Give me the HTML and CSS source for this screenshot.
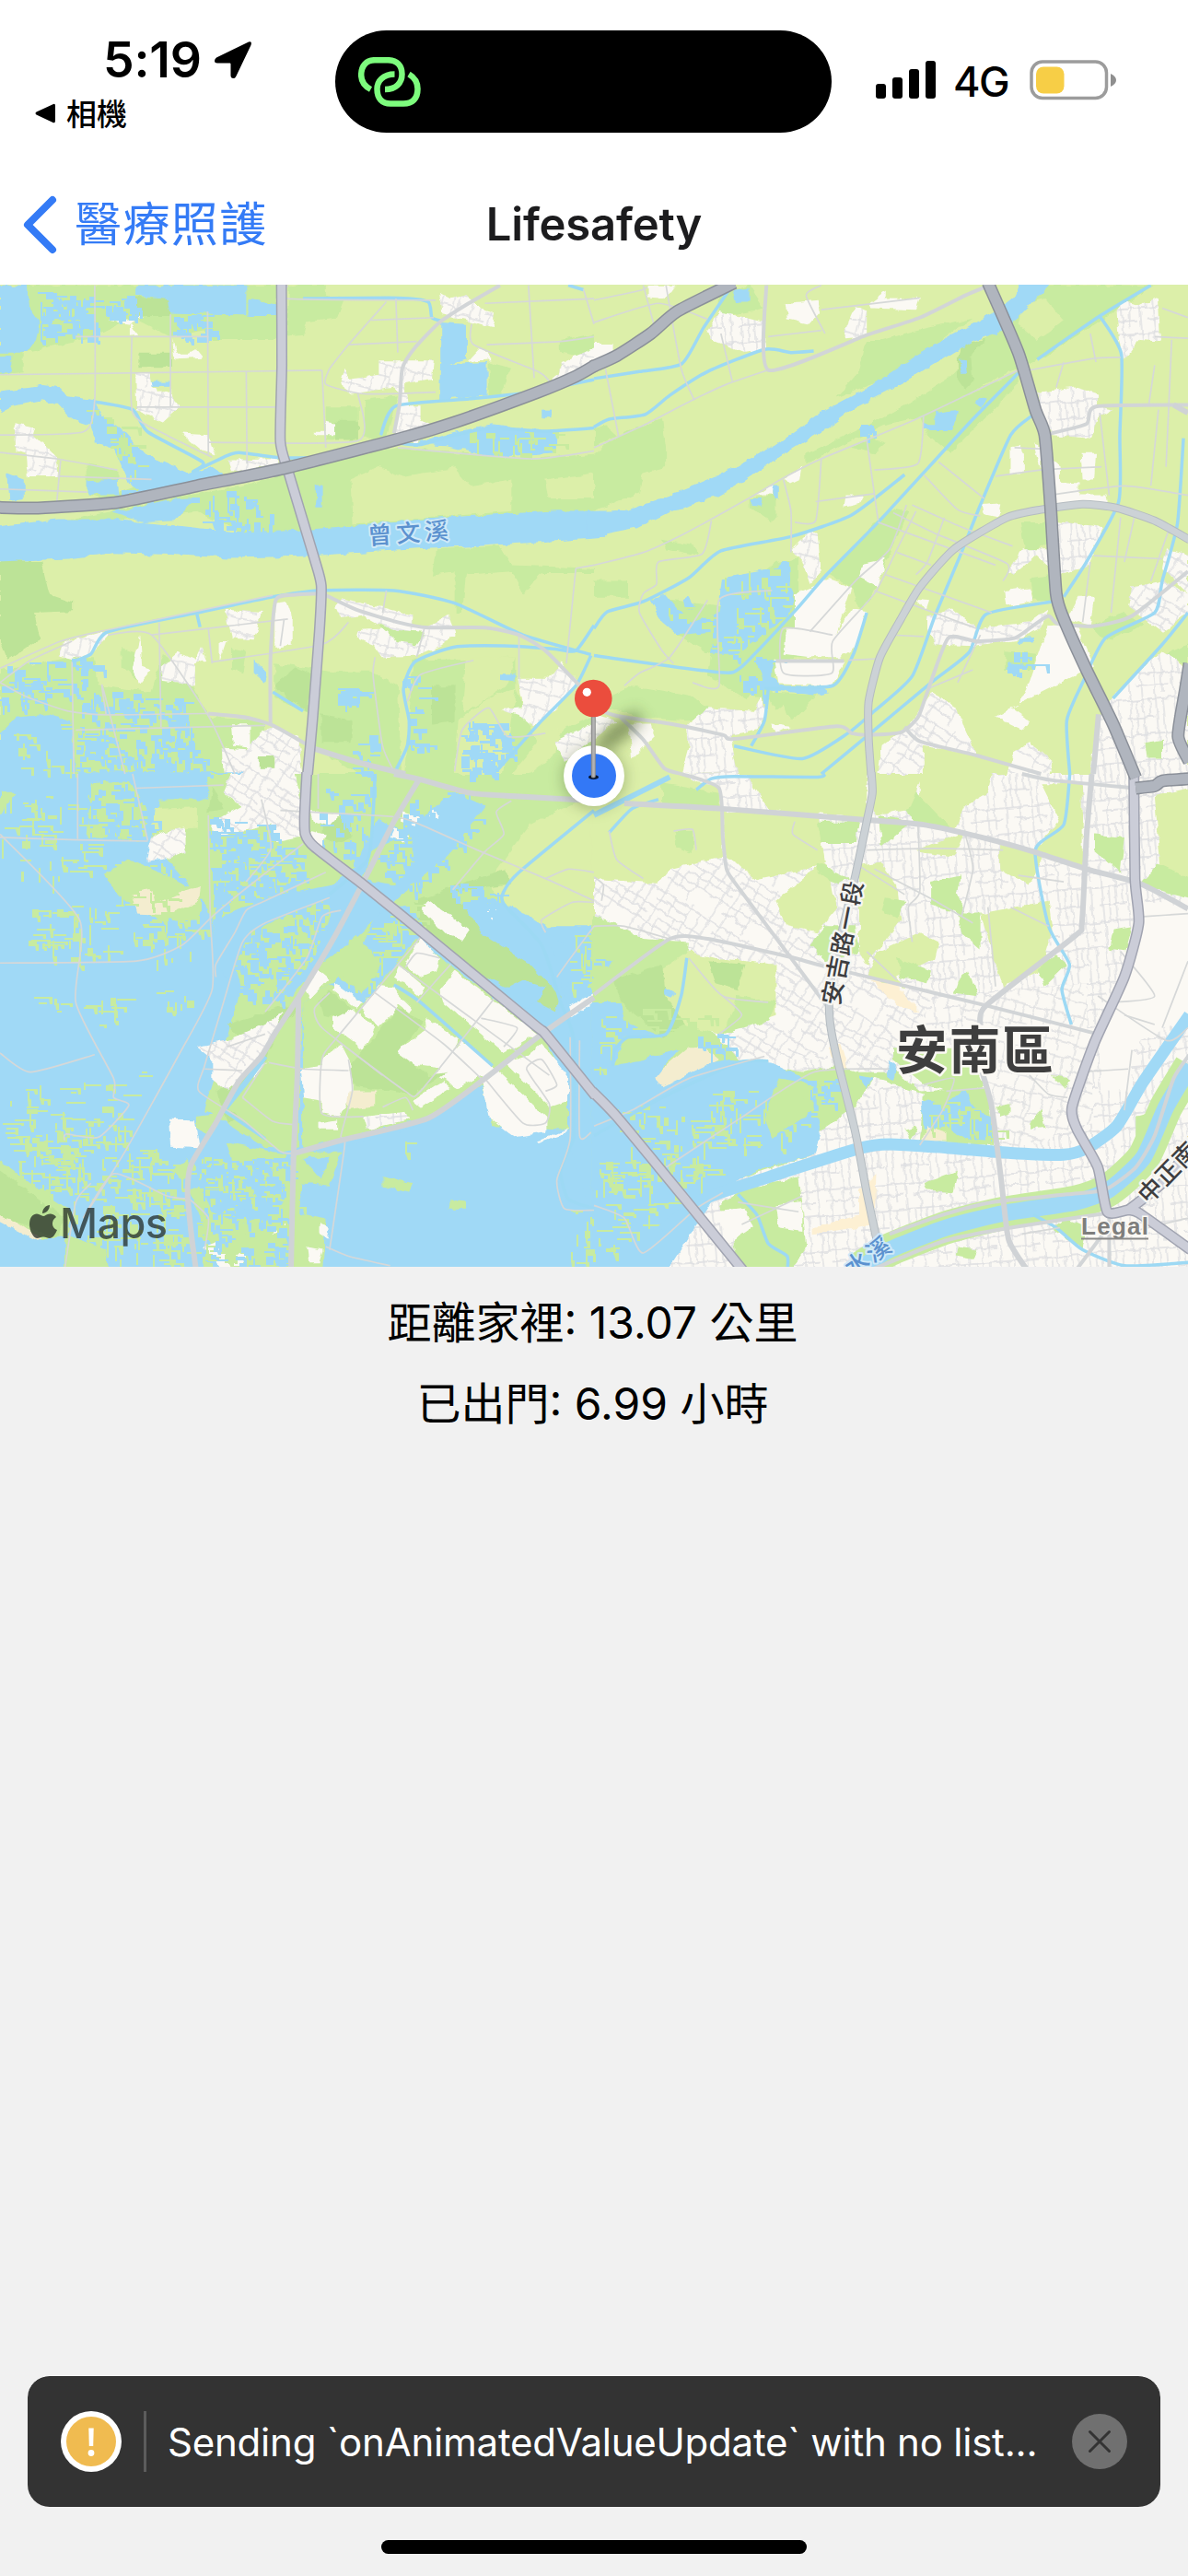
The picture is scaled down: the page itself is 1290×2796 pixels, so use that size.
FILE: index.html
```html
<!DOCTYPE html>
<html lang="zh-Hant">
<head>
<meta charset="utf-8">
<title>Lifesafety</title>
<link rel="stylesheet" href="styles.css">
</head>
<body>
<div class="screen">
  <header class="status">
    <div class="status-left">
      <div class="clock"><span class="time">5:19</span>
        <svg class="arrow" width="42" height="42" viewBox="0 0 42 42"><path d="M38 1.5 3 18.500Q1 20 1 22Q1 24.500 4 24.500H17.500Q18.500 24.500 18.500 25.500V38Q18.500 41 21.500 41Q23.500 41 24.500 38.500L40.500 5Q42 0 38 1.500Z"/></svg>
      </div>
      <div class="back-app"><svg width="22" height="22" viewBox="0 0 22 22"><path d="M20 1Q22 0 22 3V19Q22 22 19.500 21L1.500 12.500Q-.5 11 1.500 9.500Z"/></svg><span>相機</span></div>
    </div>
    <div class="island">
      <svg width="68" height="54" viewBox="0 0 68 54"><g fill="none" stroke="#7dfc7d" stroke-width="6.500"><path d="M13.500 35C6 31 3.200 26 3.200 19.500C3.200 9 9 3.200 18 3.200H32C42 3.200 47.500 9 47.500 18.500C47.500 28 41 35 29 35"/><path d="M39.500 18.500C27 18.500 20.500 26 20.500 34.500C20.500 45 26 50.500 35 50.500H49C59 50.500 64.500 45 64.500 34.500C64.500 28 61 22 55 18.500"/></g></svg>
    </div>
    <div class="status-right">
      <svg class="bars" width="66" height="42" viewBox="0 0 66 42"><rect y="25" width="11" height="16" rx="3"/><rect x="18" y="18" width="11" height="23" rx="3"/><rect x="36" y="9" width="11" height="32" rx="3"/><rect x="54" width="11" height="41" rx="3"/></svg>
      <span class="net">4G</span>
      <svg class="battery" width="95" height="44" viewBox="0 0 95 44"><rect x="2" y="2" width="81.500" height="39.500" rx="12" fill="none" stroke="#9c9c9c" stroke-width="3.500"/><rect x="7" y="7.500" width="30.500" height="29" rx="8" fill="#f7ce46"/><path d="M88 15Q94 18 94 22T88 29Z" fill="#8f8f8f"/></svg>
    </div>
  </header>
  <nav class="nav">
    <div class="nav-back"><svg width="38" height="64" viewBox="0 0 38 64"><path d="M33 5 6 32 33 59" fill="none" stroke="#347bf6" stroke-width="8" stroke-linecap="round" stroke-linejoin="round"/></svg><span>醫療照護</span></div>
    <h1>Lifesafety</h1>
  </nav>
  <main>
    <svg class="map" width="1290" height="1066" viewBox="0 309 1290 1066">
      <defs>
        <filter id="rough" filterUnits="userSpaceOnUse" x="-20" y="290" width="1330" height="1110"><feTurbulence type="fractalNoise" baseFrequency=".09" numOctaves="2" seed="4"/><feDisplacementMap in="SourceGraphic" scale="7" xChannelSelector="R" yChannelSelector="G"/></filter>
        <filter id="soft" x="-100%" y="-150%" width="300%" height="400%"><feGaussianBlur stdDeviation="8"/></filter>
        <pattern id="st1" width="54" height="46" patternUnits="userSpaceOnUse" patternTransform="rotate(14)"><rect width="54" height="46" fill="#fbf9f4"/><path d="M0 6H54M0 19H24M24 27H54M0 36H54M5 0V46M18 6V36M24 0V46M38 6V46M48 6V27" stroke="#dedfe1" stroke-width="1.300" fill="none"/></pattern>
        <pattern id="st2" width="70" height="62" patternUnits="userSpaceOnUse" patternTransform="rotate(32)"><rect width="70" height="62" fill="#fbf9f4"/><path d="M0 5H70M0 14H40M0 24H70M14 33H70M0 42H70M0 52H30M6 0V62M20 5V24M30 24V62M40 0V42M52 5V33M62 0V62M14 33V52" stroke="#dddee1" stroke-width="1.300" fill="none"/></pattern>
        <pattern id="st3" width="48" height="66" patternUnits="userSpaceOnUse" patternTransform="rotate(-5)"><rect width="48" height="66" fill="#fbf9f4"/><path d="M0 7H48M0 26H30M0 45H48M12 57H48M4 0V66M11 7V45M18 0V66M25 7V26M32 0V66M40 7V66" stroke="#dddee1" stroke-width="1.300" fill="none"/></pattern>
      </defs>
      <rect y="309" width="1290" height="1066" fill="#dcefa9"/>
      <g id="areas" filter="url(#rough)"></g>
      <g id="chips"></g>
      <g id="roads"></g>
      <g class="label river">
        <text transform="translate(400 591) rotate(-4)" letter-spacing="5">曾文溪</text>
        <text transform="translate(925 1387) rotate(-34)" letter-spacing="2">水溪</text>
      </g>
      <g class="label road-name">
        <text transform="translate(911 1092) rotate(-79)" letter-spacing="1.500">安吉路一段</text>
        <text transform="translate(1247 1308) rotate(-46)" letter-spacing="1">中正南路</text>
      </g>
      <text class="label district" x="973" y="1160" textLength="171">安南區</text>
      <g class="brand">
        <path d="M54 1308C54 1313 50 1317 46 1317C46 1312 50 1308 54 1308ZM47 1320C49 1320 51 1317 55 1317.500C58 1318 60 1319 61 1321C55 1325 56 1333 62 1335C60 1340 57 1344 54 1344C51 1344 50 1342.500 47 1342.500C44 1342.500 43 1344 40 1344C36 1344 32 1335 32 1329C32 1321 36 1317.500 40 1317.500C43 1317.500 45 1320 47 1320Z"/>
        <text class="maps" x="65" y="1344" textLength="117">Maps</text>
      </g>
      <text class="legal" x="1174" y="1340" textLength="73">Legal</text>
      <path d="M1174 1344.500H1247" stroke="#8a8a88" stroke-width="2"/>
      <g>
        <ellipse cx="672" cy="794" rx="31" ry="10" transform="rotate(-38 672 794)" fill="#42552c" opacity=".6" filter="url(#soft)"/>
        <circle cx="645" cy="844" r="34" fill="#42552c" opacity=".35" filter="url(#soft)"/>
        <circle cx="645" cy="842" r="33" fill="#fff"/><circle cx="645" cy="842" r="24" fill="#3378f6"/>
        <ellipse cx="644.500" cy="843.500" rx="5.500" ry="2.500" fill="#06152f"/>
        <path d="M644.300 776V842" stroke="#8f8f8f" stroke-width="5" stroke-linecap="round"/><path d="M644.500 779V842" stroke="#b3b3b3" stroke-width="2.500" stroke-linecap="round"/>
        <circle cx="644.300" cy="758" r="20.300" fill="#eb4d3d"/><circle cx="637.300" cy="751.300" r="4.600" fill="#fff"/>
      </g>
    </svg>
    <p>距離家裡: 13.07 公里</p>
    <p>已出門: 6.99 小時</p>
  </main>
  <footer>
    <div class="toast">
      <svg width="66" height="66" viewBox="0 0 66 66"><circle cx="33" cy="33" r="33" fill="#fff"/><circle cx="33" cy="33" r="27" fill="#f0bb50"/><path d="M30.300 18.500H35.700L35.200 38H30.800Z" fill="#fff"/><circle cx="33" cy="45.500" r="3.400" fill="#fff"/></svg>
      <i class="rule"></i>
      <span class="message">Sending `onAnimatedValueUpdate` with no list...</span>
      <svg width="60" height="60" viewBox="0 0 60 60"><circle cx="30" cy="30" r="30" fill="#707070"/><path d="M19.500 19.500 40.500 40.500M40.500 19.500 19.500 40.500" stroke="#333" stroke-width="3" stroke-linecap="round"/></svg>
    </div>
    <div class="home"></div>
  </footer>
</div>
<script src="map.js"></script>
</body>
</html>
```
FILE: styles.css
```css
* { box-sizing: border-box; }
body { margin: 0; background: #f1f1f1; font-family: Inter, "Noto Sans CJK TC", sans-serif; color: #000; }
.screen { width: 1290px; height: 2796px; display: flex; flex-direction: column; overflow: hidden; }
.status { height: 177px; background: #fff; display: grid; grid-template-columns: 364px 539px 1fr; align-items: start; }
.status-left { padding: 33px 0 0 38px; }
.clock { display: flex; align-items: center; gap: 12px; padding-left: 74px; height: 64px; }
.time { font-size: 53.5px; font-weight: 600; line-height: 64px; letter-spacing: -.2px; width: 108px; }
.back-app { display: flex; align-items: center; gap: 12px; height: 52px; font-size: 33px; font-weight: 500; }
.back-app span { margin-top: -3px; }
.island { height: 111px; margin-top: 33px; border-radius: 56px; background: #000; padding: 29px 25px; }
.status-right { display: flex; align-items: center; padding: 65px 0 0 48px; height: 109px; }
.net { font-size: 45px; font-weight: 500; line-height: 44px; margin: 4px 0 0 18px; width: 64px; letter-spacing: -1.5px; }
.battery { margin-left: 19px; }
.nav { height: 132px; background: #fff; display: grid; grid-template-columns: 1fr auto 1fr; align-items: center; padding: 0 24px; }
.nav-back { display: flex; align-items: center; gap: 19px; color: #347bf6; font-size: 51px; line-height: 70px; letter-spacing: 1.4px; padding-top: 2px; }
.nav h1 { margin: 0; font-size: 49px; font-weight: 600; letter-spacing: -.2px; color: #1c1c1e; }
main { flex: 1; }
.map { display: block; }
main p { margin: 0; height: 88px; line-height: 88px; padding: 17px 3px 0 0; font-size: 48px; text-align: center; }
footer { display: flex; flex-direction: column; align-items: center; gap: 36px; height: 218px; }
.toast { width: 1230px; height: 143px; border-radius: 24px; background: #333; border-top: 1px solid #fff; display: flex; align-items: center; padding: 0 36px; color: #fff; }
.rule { width: 3px; height: 66px; background: #5c5c5c; margin: 0 23px 0 24px; }
.message { flex: 1; font-size: 42px; white-space: nowrap; letter-spacing: -.22px; }
.home { width: 462px; height: 15px; border-radius: 8px; background: #000; }
.label { font-family: "Noto Sans CJK TC", sans-serif; paint-order: stroke; stroke-linejoin: round; }
.river { font-size: 26px; font-weight: 500; fill: #5b91cf; stroke: #cfe9f8; stroke-width: 4px; }
.road-name { font-size: 26px; font-weight: 500; fill: #3d3d3f; stroke: #f5f5f2; stroke-width: 5px; }
.district { font-size: 56px; font-weight: 700; fill: #3e3e3e; stroke: #fbf9f4; stroke-width: 5px; }
.brand { fill: #1d2420; opacity: .72; }
.maps { font-size: 45px; font-weight: 500; }
.legal { font-family: "Liberation Sans", sans-serif; font-size: 26px; font-weight: 700; fill: #7e7e7c; stroke: #fbf9f4; stroke-width: 3px; paint-order: stroke; }
```
FILE: map.js
```js
// Map tiles: every quadrant keeps its own local grid, converted to map pixels by its origin.
const SX = 0.41135, SY = 0.34438;
const origin = { A: [0, 300], B: [645, 300], C: [0, 840], D: [645, 840] };
const fill = { mid: '#c8eba0', dark: '#bce397', light: '#dcefa9', water: '#a0d9f6', town: '#fbf9f4', s1: 'url(#st1)', s2: 'url(#st2)', s3: 'url(#st3)', sand: '#f4edcf', orange: '#fdf0d3' };
const stroke = { motor: [['#8b9099', 14], ['#b0b5be', 11]], main: [['#a1a4b1', 12], ['#cbcdd8', 9]], ring: [['#b5bcc1', 9], ['#ccd2d6', 7]], major: [['#d0d3d6', 6]], road: [['#d2d5d7', 4]], lane: [['#d6d8d8', 1.7]], creek: [['#9dd9f4', 3.5]], canal: [['#9dd9f4', 6]], river: [['#a0d9f6', 13]], bank: [['#c8eba0', 36], ['#a0d9f6', 18]] };

const areas = {
A: [
['mid','0,28 730,28 730,200 560,200 540,170 450,190 350,130 250,190 60,240 60,300 0,305'],
['dark','350,65 450,65 450,125 350,125'],['dark','368,243 452,243 452,285 368,285'],
['mid','760,28 860,28 860,60 910,70 890,130 810,140 800,185 760,190'],['mid','860,410 945,410 945,515 860,515'],['dark','885,455 945,455 945,515 885,515'],
['mid','860,580 1050,540 1400,575 1568,560 1568,740 1230,755 860,800 640,810 520,740 300,770 180,765 450,700 640,660'],
['light','925,640 1000,600 1060,630 1200,605 1240,660 1350,640 1350,740 930,780'],['light','1440,640 1568,620 1568,700 1450,700'],
['mid','1150,860 1320,850 1350,910 1568,920 1568,935 1430,935 1380,1000 1350,930 1230,940 1220,1060 1200,1060 1200,930 1140,940'],
['mid','1290,270 1350,290 1320,375 1290,375'],['mid','960,390 1050,375 1020,510 960,510'],['mid','1480,200 1568,180 1568,260 1480,240'],['mid','230,590 310,610 310,680 400,640 440,665 300,710 230,690'],
['dark','0,890 110,900 130,1000 190,1025 190,1055 90,1060 105,1140 20,1210 0,1150'],
['mid','0,1240 190,1200 250,1200 260,1290 400,1310 430,1190 510,1290 550,1390 700,1400 700,1568 0,1568'],
['mid','725,1220 870,1245 980,1245 1050,1290 1060,1568 940,1568 830,1480 830,1380 725,1330'],['dark','725,1290 780,1235 830,1260 810,1370 740,1310'],['dark','850,1380 930,1400 930,1470 850,1470'],
['mid','1090,1210 1360,1200 1360,1300 1290,1330 1210,1400 1200,1568 1070,1568'],['light','1230,1200 1360,1200 1340,1290 1220,1380'],['dark','1140,1290 1200,1290 1200,1400 1140,1410'],['mid','1360,1300 1430,1500 1500,1420 1568,1380 1568,1568 1330,1568'],['light','1440,1440 1480,1420 1470,1500 1400,1568 1350,1568'],['mid','320,1170 370,1190 360,1270 320,1230'],['mid','610,1170 650,1180 640,1250 610,1240'],
['water','0,28 70,28 75,90 105,140 95,200 70,240 0,240'],['water','360,28 650,28 650,120 560,118 450,115 445,70 360,60'],['water','655,72 730,85 730,125 655,125'],['water','0,250 30,250 30,300 0,300'],
['water','0,365 110,345 160,352 180,378 250,390 270,440 320,480 370,545 430,585 500,622 560,600 610,640 440,672 385,690 340,650 300,540 250,520 240,470 190,450 150,400 110,390 30,410 0,430'],
['water','295,745 440,705 520,700 460,770 380,775'],['water','20,620 65,640 65,700 25,705'],['water','230,645 310,640 315,690 230,690'],['water','833,658 850,658 850,728 835,728'],
['water','0,788 150,765 290,765 460,785 640,808 800,800 1000,776 1230,756 1470,738 1600,740 1600,824 1230,852 1000,867 800,882 600,887 450,877 300,872 180,890 -20,899'],
['water','1162,278 1285,270 1285,375 1160,390'],['water','1165,145 1230,150 1230,260 1165,285'],['water','1080,530 1200,490 1300,468 1380,480 1472,490 1470,555 1300,570 1180,535'],['water','1430,420 1455,420 1455,445 1430,445'],
['water','0,1440 40,1390 130,1380 190,1400 200,1568 0,1568'],['water','670,1210 705,1250 700,1280 670,1250'],['water','1320,1255 1358,1255 1355,1275 1320,1272'],['water','395,330 450,330 450,345 395,345'],
['town','455,195 465,240 500,240 515,230 532,255 460,260'],['s1','358,305 395,305 400,345 425,365 450,360 452,305 450,375 475,410 430,460 360,425'],['town','280,138 380,128 345,150 365,185 345,188 345,150'],['town','480,495 550,500 570,565 530,545'],
['s1','40,465 95,480 90,500 150,570 155,630 75,630 70,560 45,550'],['s1','600,580 735,575 735,590 640,615 610,610'],['town','830,490 860,490 860,455 885,460 885,500 835,500'],['s1','895,340 910,290 920,325 1000,310 1000,265 1030,265 1145,265 1140,325 1070,340 1070,380 1040,350 930,370'],
['s1','1060,370 1075,370 1080,410 1110,410 1110,450 1140,470 1100,525 1040,500'],['s1','1160,50 1190,70 1230,60 1280,110 1305,120 1300,160 1240,140 1165,120'],['town','1235,270 1270,225 1300,262 1260,265'],['s1','1568,225 1480,270 1475,310 1450,330 1500,320 1568,280'],
['s1','165,1155 270,1120 290,1125 240,1190 190,1205 155,1195'],['s1','595,1050 690,1060 670,1145 610,1140 600,1090'],['town','725,1030 755,1025 770,1080 770,1160 725,1170'],['s1','425,1230 470,1185 515,1210 530,1170 545,1210 515,1220 515,1290 475,1280 430,1275'],['town','350,1235 370,1130 375,1230 400,1240 370,1285'],['town','580,1150 597,1150 580,1210'],
['s1','885,1040 900,1015 1000,1040 1090,1070 1090,1100 1120,1110 1185,1065 1200,1130 1160,1165 1100,1195 1010,1200 990,1165 940,1140 945,1115 1020,1110 960,1070 900,1080'],['mid','1000,1100 1050,1115 1120,1120 1100,1160 1050,1150 1020,1120'],
['s2','585,1485 650,1490 690,1440 730,1420 790,1450 800,1568 590,1568'],['town','610,1415 660,1415 660,1485 615,1480'],['s1','1365,1265 1450,1265 1480,1215 1525,1280 1470,1360 1410,1420 1380,1390 1320,1365 1380,1360'],['s1','1568,1405 1465,1465 1490,1530 1550,1470 1568,1470'],['dark','685,1510 725,1510 725,1550 685,1550']
],
B: [
['mid','0,560 80,490 180,450 190,540 190,600 130,620 120,680 0,740'],['mid','720,200 760,200 850,170 1000,130 850,260 780,320 640,380 700,300'],['dark','970,215 1085,180 1100,230 960,280'],
['mid','330,60 410,28 450,100 330,130'],['mid','1090,120 1200,28 1480,28 1180,260 1120,290 870,440 760,470 560,590 560,560 720,470 830,400 950,310'],['light','1130,90 1190,70 1240,140 1170,200 1120,150'],['dark','960,255 995,255 1000,330 980,355 960,320'],
['mid','860,440 1120,300 1120,340 940,560 880,500'],['mid','0,480 30,470 60,500 0,540'],['mid','180,830 270,850 280,880 190,860'],['mid','0,960 90,960 90,1010 0,1010'],['mid','730,790 790,730 830,740 780,880 740,1000 700,1060 680,980 620,940'],
['mid','150,1010 330,1040 480,900 540,890 540,1180 480,1260 400,1330 300,1260 310,1190 220,1130'],['mid','500,1100 640,1150 640,1200 500,1200'],
['mid','100,1290 250,1320 330,1380 250,1400 120,1390 0,1350'],['mid','380,1260 450,1250 480,1330 440,1340'],['mid','460,1310 590,1320 540,1380 520,1400 500,1350 480,1370'],
['mid','1125,775 1200,775 1200,840 1140,880'],['mid','1150,950 1210,940 1230,1030 1160,1020'],['mid','1085,1180 1170,1190 1160,1240 1085,1240'],['mid','1310,1100 1400,1060 1450,1100 1350,1150'],['mid','1568,1160 1510,1190 1568,1230'],['mid','410,700 480,690 480,760 465,770 410,725'],['mid','680,540 730,510 770,525 740,555'],
['water','-20,742 90,736 180,698 330,625 480,530 600,430 740,338 850,248 940,188 1070,105 1110,68 1130,10 1215,10 1200,32 1085,170 1000,203 850,312 700,405 620,475 500,562 400,643 330,692 200,742 120,790 -20,823'],
['water','365,45 410,40 410,80 375,80'],['water','965,260 980,262 985,310 970,310'],['water','470,655 488,655 488,705 475,705'],['water','415,700 445,700 440,722 415,720'],['water','870,465 900,465 900,430 960,420 950,485 870,485'],['water','1005,400 1020,380 1035,385 1025,415'],
['water','150,1020 190,1000 250,1090 330,1060 340,950 480,920 500,895 515,900 520,980 530,990 520,1060 450,1130 380,1190 310,1190 310,1120 220,1130 180,1090'],['water','235,1020 255,1005 270,1050 240,1040'],['water','430,1220 470,1210 470,1260 490,1290 600,1290 620,1310 580,1320 450,1300'],['water','1120,1140 1165,1135 1160,1155 1115,1155'],['water','1090,1220 1145,1225 1145,1240 1090,1240'],
['s3','300,170 330,110 450,145 455,230 400,240 310,200'],['town','505,85 590,75 598,110 570,150 510,135'],['s1','660,175 690,95 720,110 720,190 660,195'],['town','725,85 770,45 770,68 860,70 850,105 730,100'],['town','140,28 215,28 190,70 140,65'],['town','0,215 50,215 50,250 0,290'],
['s3','1380,110 1400,80 1440,90 1490,65 1495,205 1440,200 1400,260 1385,200'],['s3','1175,365 1270,350 1330,370 1330,410 1370,420 1330,450 1310,510 1210,500 1180,420'],['town','1100,535 1120,530 1135,560 1135,620 1100,620'],['town','1160,530 1180,540 1180,610'],['town','1210,580 1230,600 1230,650 1280,655 1280,690 1350,690 1355,715 1190,720'],['town','1285,560 1325,560 1320,640 1290,640'],['town','1025,720 1075,715 1070,760 1030,750'],
['s3','1205,770 1345,790 1300,920 1220,940 1170,880 1110,940 1090,930 1130,860 1200,860'],['town','1085,990 1150,980 1160,1025 1090,1040'],['town','530,1000 620,955 680,980 640,1130 680,1045 720,1055 690,1170 650,1200 610,1200 570,1200 500,1190 505,1110 530,1110'],['town','475,1210 665,1210 630,1290 485,1285'],['s1','520,860 570,800 590,810 600,930 570,970 550,900'],['town','710,905 770,890 750,980 700,950'],['town','665,690 710,690 700,715 660,725'],['town','500,635 550,600 545,640 520,655'],['town','430,690 475,655 470,690'],
['s1','880,1070 950,1050 1010,1110 1150,1090 1200,1050 1180,1110 1110,1145 1000,1165 900,1160 880,1110'],['town','850,1015 885,1020 875,1055'],['town','1200,1100 1270,1100 1320,1230 1200,1300 1100,1360 1150,1400 1130,1430 1060,1390 1120,1350 1150,1280'],['town','1250,1080 1280,1010 1320,1010 1310,1100'],
['s2','1568,880 1510,860 1500,920 1568,1000'],['s2','1410,1040 1420,980 1500,960 1568,1000 1568,1060 1500,1120'],['s2','760,1480 830,1420 890,1310 960,1360 980,1430 1010,1510 870,1480 870,1568 750,1568'],['s2','1110,1500 1150,1470 1210,1530 1200,1568 1090,1568'],
['s3','245,1415 300,1360 420,1370 440,1330 455,1370 430,1430 360,1450 380,1568 230,1568 250,1480'],['town','470,1410 520,1420 480,1440'],['s3','1330,1400 1370,1320 1500,1180 1540,1210 1568,1250 1568,1568 1310,1568'],['mid','1455,1470 1500,1460 1500,1520 1460,1520'],['s1','0,1380 60,1400 40,1420 0,1460'],['town','90,1410 150,1410 160,1450 100,1520']
],
C: [
['water','-20,-5 640,-5 850,340 1568,320 1568,1590 -20,1590'],
['mid','550,0 1568,0 1568,340 1380,400 1000,420 940,600 800,720 780,1180 700,1180 600,1100 540,1060 600,830 640,650 580,600 550,420 400,210 420,80 550,80'],
['light','1300,320 1400,160 1568,60 1568,480 1440,480 1340,410 1300,360'],['light','405,110 520,105 520,170 400,180'],
['mid','240,30 340,20 390,110 390,210 230,200'],['mid','0,60 40,60 0,130'],['mid','270,320 340,270 420,310 530,370 530,460 420,460 330,400'],['sand','345,370 400,360 410,410 480,370 530,355 525,400 440,445 360,440'],
['water','560,460 700,390 880,350 930,300 1000,140 1060,180 1200,60 1280,100 1180,260 1060,380 900,560 840,600 770,700 600,640 570,600'],['mid','620,600 660,500 780,430 870,400 870,450 830,580 740,700 640,690'],['mid','850,600 940,510 1010,600 960,690 900,650'],
['dark','560,40 590,110 550,120'],['mid','810,0 1000,0 980,140 930,230 850,240 810,180'],['dark','850,150 920,130 930,200 890,220 850,200'],['mid','980,240 1080,190 1100,280 1040,350 960,330'],
['dark','1090,400 1330,300 1350,350 1200,370 1270,500 1400,600 1480,700 1470,750 1200,590 1120,500'],['water','1330,680 1380,650 1440,670 1420,720 1380,740'],['water','1440,500 1520,560 1500,680 1568,690 1568,1568 1540,1300 1500,1150 1500,760 1470,590'],
['dark','600,790 780,720 790,1180 640,1080 600,1100 570,1000 680,900'],['mid','740,800 790,740 790,1180 740,1190 600,1050 700,900'],
['mid','800,720 870,660 960,720 1100,520 1440,830 1500,1000 1500,1120 1300,1140 1100,1090 900,1150 800,1180'],['dark','840,720 870,680 930,740 900,770 850,760'],
['water','810,1210 1100,1110 1270,980 1300,1110 1500,1120 1470,1270 1500,1350 1568,1370 1568,1590 850,1590 880,1250'],
['mid','780,1190 900,1190 870,1300 790,1290'],['water','800,1210 870,1210 850,1280'],
['mid','-20,1200 80,1290 190,1380 180,1450 110,1470 -20,1390'],['dark','-20,1230 90,1330 170,1400 150,1460 -20,1380'],['sand','-20,1380 40,1410 110,1465 100,1475 -20,1400'],['mid','170,1450 280,1500 290,1590 170,1590'],
['mid','500,1310 800,1200 780,1590 700,1590 560,1500'],['water','540,1180 720,1180 750,1350 640,1420 560,1380 520,1280'],['mid','600,1160 760,1200 700,1280 620,1250'],['mid','520,1080 580,1070 550,1140 520,1120'],['mid','450,1250 500,1210 490,1280'],['mid','770,1380 860,1400 850,1590 780,1590'],
['mid','1010,1270 1090,1290 1080,1320 1010,1300'],['mid','1190,1345 1230,1348 1230,1370 1185,1370'],
['s2','590,60 610,0 780,0 800,120 790,200 730,215 720,160 640,180 560,205 560,150 640,100'],['s2','385,275 400,200 430,180 490,170 490,245 430,270'],['town','820,120 900,125 870,165 830,150'],['town','820,180 860,190 850,240 820,210'],['town','1060,120 1120,140 1100,165 1060,150'],['town','1150,110 1165,140 1140,145 1130,125'],['town','1040,175 1080,195 1070,215 1030,200'],['town','1130,400 1240,490 1220,525 1180,510 1115,430'],['town','1275,425 1310,415 1300,460 1275,445'],
['town','1110,520 1160,580 1150,620 1110,640 1070,600'],['town','1050,600 1120,670 1110,700 1040,640'],['town','1200,620 1420,820 1330,880 1170,720 1160,680'],['town','1000,665 1040,670 1050,740 1000,800 950,740'],['town','1040,680 1090,740 1080,755 1020,700'],['town','840,615 870,645 820,710 805,680'],['town','880,655 955,720 940,740 880,680'],['town','930,740 990,800 960,870 880,800 880,770'],['town','850,900 900,850 930,920 930,1000 900,1080 850,1070 850,1030 800,1020 795,930 850,920'],
['town','1130,770 1210,840 1180,930 1050,910 1050,870 1120,810'],['town','1160,930 1220,840 1310,930 1210,990 1150,950'],['town','1330,910 1390,890 1430,850 1500,950 1500,1030 1450,1050 1340,920'],['town','1270,970 1310,930 1440,1080 1440,1130 1360,1145 1290,1080'],
['dark','920,930 1050,740 1120,780 1050,880 1130,950 1180,940 1090,1010 940,985'],['sand','920,1000 990,1000 990,1050 915,1060'],['town','1090,1030 1170,970 1190,990 1110,1050'],['s3','960,1080 1070,1065 1080,1090 970,1120'],
['s2','520,860 600,840 700,790 750,750 700,870 640,960 600,1000 560,960 560,900'],['town','445,1088 515,1090 520,1140 530,1180 450,1175'],['town','670,940 710,900 690,930 670,960'],['town','840,1100 890,1090 890,1120 840,1120'],['town','720,1450 760,1410 760,1440'],['town','845,1420 870,1430 865,1465 845,1450'],['town','535,1490 570,1475 600,1530 650,1500 640,1568 590,1568'],['town','810,1490 850,1500 840,1540 815,1540'],['town','1415,1160 1500,1115 1480,1140 1420,1165'],['town','1500,730 1568,690 1568,720 1510,770']
],
D: [
['s3','0,0 1600,0 1600,1590 0,1590'],['s2','0,240 620,280 700,900 400,900 0,900'],['s2','600,620 900,680 800,950 690,1060 600,740'],['s1','960,700 1300,660 1320,1100 1060,1200'],
['light','-5,-5 330,-5 340,260 200,300 170,345 -5,330'],['s3','230,-5 380,-5 360,40 270,30'],['light','340,120 590,110 610,280 560,300 430,335 380,280 345,260'],['light','400,0 720,0 720,140 460,110'],['mid','800,0 960,180 850,150 780,60'],['light','730,0 870,0 830,110 740,130'],['light','860,0 1050,0 1040,60 980,100 950,180 860,70'],['mid','750,130 840,150 760,230'],['mid','180,30 330,60 330,115 180,100'],['mid','210,180 260,180 260,250 220,230'],['mid','590,150 700,150 690,215 600,215'],
['light','1180,30 1290,30 1290,300 1190,260 1160,240 1230,150'],['light','1480,70 1600,40 1600,400 1500,350'],['mid','1490,280 1600,340 1600,400 1440,350'],['light','480,400 600,280 620,300 640,430 590,500 510,480'],['mid','590,280 680,330 640,350 590,310'],
['light','700,290 760,280 800,350 810,460 720,600 700,560'],['mid','770,390 820,400 800,460 760,430'],['light','850,240 980,180 950,260 880,250'],['light','1070,220 1190,250 1150,350 1070,300'],['mid','890,340 970,320 960,380 980,440 1020,440 1020,550 970,500 960,440 890,410'],['light','1020,440 1200,400 1210,500 1180,620 1080,670 1050,560'],['light','860,500 910,530 900,580 800,640 820,680 720,640 750,560'],['mid','800,580 890,620 880,660 810,640'],['mid','960,650 990,620 1010,700 950,690'],['mid','570,540 610,480 690,480 700,560 610,590'],['mid','1320,190 1400,200 1390,310 1320,240'],['mid','1370,490 1420,480 1410,560 1360,550'],['mid','1170,610 1220,570 1250,600 1190,670'],
['mid','-5,450 50,470 130,520 250,530 230,760 330,830 380,900 550,940 640,920 700,940 800,940 860,1000 1040,990 1060,1170 860,1160 870,1010 740,960 690,1050 590,1130 580,1200 420,1260 200,1360 -5,1500'],
['light','150,640 250,560 320,580 480,600 480,760 330,820 230,790'],['dark','50,650 180,600 190,700 240,790 180,830 80,730'],['dark','300,590 400,600 380,680 320,660'],['mid','380,700 480,720 460,780 340,820'],
['water','-5,720 70,720 80,780 180,830 80,830 60,920 130,860 230,860 180,930 360,900 470,910 590,980 590,1080 600,1130 580,1200 430,1250 330,1310 180,1590 -5,1590'],['mid','50,920 80,850 200,850 270,850 130,900'],['mid','490,960 580,980 580,1060 470,1150 450,1080'],
['sand','160,960 180,930 250,860 290,860 330,900 180,985'],['water','865,1030 930,1040 980,990 1000,1050 1050,1080 1050,1160 980,1150 930,1110 870,1120'],['sand','880,1110 930,1130 930,1160 865,1160'],['water','780,900 800,920 790,970 770,960'],['water','700,950 740,960 720,985'],
['mid','330,1360 390,1310 540,1270 550,1350 560,1500 500,1590 380,1560 370,1470'],['town','320,1380 400,1370 420,1430 370,1470 330,1420'],['town','480,1360 550,1350 550,1440 490,1430'],['mid','870,1290 960,1250 950,1320 875,1310'],['mid','1060,1050 1100,1040 1100,1070 1070,1080'],['mid','1150,1100 1180,1060 1190,1115 1150,1120'],['mid','1210,950 1260,960 1240,990'],['mid','790,860 990,870 1030,990 930,1000 860,970 790,900'],
['orange','730,650 790,660 860,750 800,730'],['orange','620,860 650,850 670,930 640,930'],['orange','700,1310 745,1260 740,1420 580,1450 580,1430 700,1390'],['town','1440,400 1600,430 1600,740 1420,860 1420,1000 1340,1000 1330,800 1390,620'],['mid','1430,1080 1460,1070 1450,1150 1430,1140'],['mid','960,1490 1010,1500 1000,1530 955,1520'],['mid','820,1120 850,1110 840,1160'],['mid','1240,1400 1300,1430 1290,1500 1210,1430'],['water','20,580 50,590 40,610 0,610 0,570'],['water','185,675 215,690 205,705 185,695']
]};

const roads = {
A: [
['creek','250,395 350,420 390,490 535,585 510,615 590,570 630,555 740,572 860,570'],['creek','1005,500 1045,408 1250,385 1400,365 1568,325'],['creek','1050,525 1110,530 1200,500 1300,478 1430,488 1568,478'],['creek','800,70 1050,68 1130,80 1140,130 1165,140'],
['creek','190,1215 240,1190 285,1120 520,1060 720,1010 840,990 1040,990 1200,1030 1380,1130 1560,1192'],['creek','1568,1100 1520,1180 1470,1175 1350,1165 1200,1168 1095,1215 1065,1300 1080,1400 1075,1480 1040,1568'],['creek','1560,1195 1520,1290 1430,1400 1310,1560'],['creek','720,1310 800,1370'],['creek','1500,28 1540,42'],['creek','520,1065 528,1105'],
['lane','0,310 850,296'],['lane','250,28 250,390 220,490 0,500'],['lane','348,190 350,430 440,500 560,570'],['lane','450,120 450,410'],['lane','548,110 550,560'],['lane','650,300 652,590'],['lane','360,412 735,412'],['lane','550,523 945,518 945,370'],['lane','200,190 550,190'],['lane','870,290 920,215 1020,80'],['lane','920,215 1100,205'],['lane','1045,70 1050,240'],['lane','850,296 860,540'],['lane','980,138 1145,130'],['lane','1395,28 1410,320'],['lane','1280,85 1568,70'],['lane','1540,40 1568,150'],['lane','1245,150 1250,215 1420,300 1450,330'],['lane','1285,215 1480,205 1568,190'],['lane','760,28 760,70 1150,75'],['lane','870,290 860,340 960,370 1150,365'],
['lane','0,555 150,575 310,610'],['lane','155,630 400,640'],['lane','160,580 150,710'],['lane','0,670 230,680'],['lane','1050,540 1400,575 1568,550'],['lane','0,1235 160,1150 280,1115 720,1005'],['lane','0,1280 80,1210 190,1150'],['lane','190,1215 195,1568'],['lane','285,1130 400,1130 550,1385 620,1568'],['lane','420,1090 425,1420'],['lane','550,1110 560,1220'],['lane','400,1130 760,1080'],['lane','560,1215 850,1160 920,1090'],['lane','200,1430 700,1415'],['lane','1020,990 1010,1060'],['lane','990,1200 985,1260 1010,1480 1040,1560'],['lane','1120,1110 1100,1200'],['lane','1370,1130 1370,1270'],['lane','1520,920 1495,1220'],['lane','1520,920 1568,910'],['lane','1075,1340 1110,1255 1250,1210'],['lane','1200,1560 1220,1430 1290,1360 1340,1450 1440,1440'],['lane','280,1380 270,1290 330,1568'],['lane','750,1080 740,1165'],
['lane','0,1280 70,1325 180,1370 290,1382 550,1378 650,1395'],['road','550,1378 650,1390 720,1415 810,1475'],['road','835,1000 780,1003 728,1020 714,1200 714,1410'],['major','820,1485 940,1530 1070,1568'],
['road','1320,28 1230,90 1160,145 1095,225 1062,290 1055,400 1040,495'],['road','860,1005 940,1050 1050,1090 1130,1107 1280,1107 1370,1130 1440,1180 1530,1290'],
['main','743,20 744,280 740,520 762,620 830,890 848,975 843,1120 825,1400 812,1570'],['motor','-10,728 100,730 310,712 520,660 750,605 1060,510 1200,460 1420,365 1520,315 1572,280']
],
B: [
['creek','0,322 120,300 232,275 290,160 365,28'],['creek','0,475 40,450 135,435 200,375 300,300 450,230 520,240 580,235'],['creek','1120,305 1000,450 900,580 850,645 750,775 610,945 530,1055 390,1230 330,1248 0,1195'],['creek','820,625 680,752 520,820 335,865 250,950 130,1025 35,1057 0,1110'],['creek','1470,28 1335,125 1170,262'],['creek','1335,125 1392,245 1388,500 1385,710 1300,900 1240,1010'],['creek','1155,440 1100,500 1020,720 970,870 900,1070 840,1260 740,1370 670,1440 550,1520 370,1480'],['creek','1210,1025 1035,1065 990,1185 890,1280 740,1430 600,1568'],['creek','1556,510 1540,780 1500,960 1480,1060 1350,1140 1290,1280 1248,1400 1256,1568'],['creek','1568,1060 1500,1160 1370,1330'],['creek','720,1060 685,1190 630,1290 450,1298'],['creek','460,1300 450,1400 415,1480'],
['lane','0,75 120,45 140,35'],['lane','0,145 170,85 300,135'],['lane','130,28 160,160'],['lane','190,28 230,290 265,390'],['lane','30,290 65,505'],['lane','0,540 130,470 260,390 350,340 460,295'],['lane','335,180 365,330'],['lane','600,105 860,68'],['lane','600,28 560,60 610,180'],['lane','460,190 600,170'],['lane','0,910 130,870 240,810 400,705 500,635 600,575 850,450 1130,290'],['lane','600,575 585,770 530,775'],['lane','500,640 520,740 520,870'],['lane','720,515 750,770'],['lane','870,440 855,590 740,610'],['lane','310,770 285,875 170,900 165,970 130,1000 120,1060 180,1180 210,1220'],['lane','585,710 740,685'],
['lane','870,625 960,735 1020,755'],['lane','910,585 1030,700'],['lane','840,720 970,790 1105,850'],['lane','790,745 900,810 1090,905 1080,960'],['lane','750,775 1060,910'],['lane','800,870 890,910'],['lane','770,940 1050,1060'],['lane','740,990 1010,1110'],['lane','925,760 880,900 850,940'],['lane','825,720 780,860 690,960 570,1120'],['lane','850,740 800,860 740,1000 630,1150 628,1250 500,1250 500,1110 630,1130'],['lane','1130,300 1310,260 1390,255'],['lane','1310,180 1325,270'],['lane','1240,270 1220,350'],['lane','1500,100 1568,130'],['lane','1480,190 1568,195'],['lane','1525,200 1510,600'],['lane','1480,280 1465,400'],['lane','1335,430 1360,690'],['lane','1200,690 1400,660 1568,690'],['lane','1490,420 1470,660'],['lane','1060,630 1180,610 1340,600'],['lane','1320,880 1500,890'],['lane','1310,900 1290,1090'],['lane','1390,760 1365,1060'],['lane','1430,740 1400,900'],['lane','1520,790 1470,960'],['lane','1110,540 1210,545'],['lane','780,1130 870,1135'],['lane','670,1210 745,1205'],['lane','1020,1130 960,1280'],['lane','1000,1240 880,1300'],['lane','260,1280 330,1290 330,1020 470,990'],['lane','80,1290 120,1250 200,1200 300,1020'],
['road','455,28 460,295 720,185 860,130 980,60 1030,35'],['road','480,1212 660,1212'],['road','0,1360 60,1385 200,1410 340,1445 370,1458 640,1418 680,1440 720,1445 810,1437 855,1390 880,1310 935,1140 1010,1150 1110,1140 1160,1100 1200,1070 1225,1095 1320,1102 1420,1070 1568,930'],['road','820,1420 860,1465 1010,1510 1180,1568'],['road','70,1390 130,1460 185,1550 230,1568'],['road','1205,495 1300,465 1325,410 1568,405'],['major','1530,405 1568,430'],['major','1332,1380 1318,1568'],
['ring','732,1575 725,1460 725,1340 755,1200 810,1080 860,980 950,860 1090,760 1180,735 1290,718 1380,730 1480,770 1572,830'],
['motor','-5,285 60,250 150,180 220,110 370,20'],['motor','1040,20 1120,240 1165,420 1190,500 1205,720 1220,1000 1240,1080 1300,1240 1370,1410 1430,1580'],['motor','1572,1220 1560,1310 1542,1450 1572,1530']
],
C: [
['creek','1568,115 1370,310 1330,370 1330,410 1430,540 1480,720 1515,840 1515,1150'],['creek','1515,1150 1480,1250 1500,1340 1568,1370'],['creek','1040,665 1110,720 1300,920'],['creek','990,0 985,120 970,270 870,380'],['canal','700,890 650,970 590,1060'],['creek','590,1060 700,1150'],
['lane','0,200 205,208 390,212'],['lane','205,0 205,205'],['lane','0,190 210,460 200,720 300,960 300,1020 340,1045 260,1145 175,1135 170,1155'],['lane','0,596 360,590 480,540 560,450 650,360 800,220'],['lane','0,880 80,940 250,885'],['lane','350,0 390,210'],['lane','360,45 590,35'],['lane','550,130 555,450 560,680 470,890 330,1190 220,1400'],['lane','690,80 715,235 650,340'],['lane','600,860 700,820'],['lane','860,310 700,400 650,430 620,500 570,600 570,640'],['lane','870,390 700,470 640,530 590,720 540,920 525,1000 640,1090 740,1190 775,1195'],['lane','900,430 850,450 810,580 700,750'],['lane','540,930 640,935'],['lane','640,1020 720,1095 775,1105'],['lane','700,910 640,1020'],['lane','710,910 800,930 920,935'],['lane','740,115 1040,135 1110,160 1270,245 1440,330 1568,400'],['lane','1195,365 1280,245 1330,190 1310,120 1350,85'],['lane','840,0 840,110'],['lane','1440,330 1500,300 1568,310'],['lane','1568,480 1500,590 1470,640'],['lane','1440,500 1430,460 1510,405 1568,405'],
['lane','1110,515 890,830 850,900 850,1070 960,1080'],['lane','1050,600 1450,950'],['lane','990,690 1170,850 1270,960'],['lane','890,840 1070,1000 1110,1000 1310,700'],['lane','870,690 830,740 850,800 1010,950'],['lane','1100,720 1190,600'],['lane','1160,580 1100,565 1070,610'],['lane','1270,770 1365,800 1330,860'],['lane','1280,960 1380,1100 1440,1100 1450,1040 1390,930 1430,900 1470,980 1440,1000'],['lane','920,900 930,1000 900,1140 910,1170 870,1500'],['lane','1010,1050 1070,1020 1090,1060'],['lane','170,1568 200,1350 240,1290'],['lane','220,1400 300,1260 440,1330 500,1340'],['lane','500,1340 550,1400 540,1500'],['lane','860,1490 920,1520 1030,1550'],['lane','1505,830 1505,1150 1470,1280 1490,1370 1568,1375'],['lane','1530,840 1530,1140 1560,1130'],
['major','1105,20 1040,150 955,350 880,520 790,700 730,810 690,890 630,970 570,1100 505,1230 495,1320 505,1450 518,1568'],['major','788,710 785,950 775,1200 768,1568'],['major','780,1195 900,1155 1130,1085 1280,960 1430,820 1568,705'],['major','1040,0 1110,18 1240,60 1350,70 1500,80 1568,85'],
['main','810,-5 804,130 806,190 830,230 960,350 1100,485 1410,790 1440,820 1572,1015']
],
D: [
['canal','0,130 200,10'],['creek','40,185 100,110 170,80'],['creek','270,50 310,15 370,8 590,10 610,0'],['creek','1256,0 1240,160 1165,240 1200,480 1255,600 1235,680 1260,790'],['creek','245,580 230,700 190,820 90,830 55,870 50,920'],['creek','0,1140 180,1020 380,910 460,905'],['creek','380,1325 430,1390 460,1480 510,1520 510,1568'],
['river','180,1440 290,1340 450,1275 700,1180 780,1167 930,1178 1100,1195 1240,1200 1300,1180 1380,1110 1450,970 1572,760'],['bank','1575,920 1510,1050 1450,1210 1360,1310 1270,1350 1080,1385 930,1430 780,1500 700,1560'],['creek','1160,1390 1220,1430 1290,1500 1400,1550 1568,1540'],
['lane','0,325 25,350 20,400'],['lane','40,180 60,270 130,330'],['lane','210,180 260,175 270,240'],['lane','530,150 525,190 590,240'],['lane','855,150 860,370 830,420 840,530'],['lane','720,240 900,235 1080,240'],['lane','740,300 900,400 1000,470'],['lane','980,190 1000,300 970,450'],['lane','1040,420 1060,670'],['lane','1120,320 1240,340'],['lane','1100,420 1200,480'],['lane','700,290 820,380'],['lane','800,650 720,560'],['lane','0,480 80,480 200,520'],['lane','250,580 340,700 460,720'],['lane','340,700 390,760 330,820'],['lane','0,1110 100,1060 250,960 450,890'],['lane','190,1240 380,1090 580,940 780,930'],['lane','0,1360 80,1400 130,1510 270,1370 340,1320'],['lane','1568,800 1510,840 1330,700'],['lane','1420,870 1400,1060'],['lane','1280,940 1410,930'],['lane','1450,450 1568,440'],['lane','1568,590 1500,800'],['lane','1390,560 1480,700 1370,720'],['lane','1400,760 1480,790'],['lane','870,980 950,960 920,1060 860,1170'],['lane','930,1000 1030,990'],['lane','1150,950 1200,1010 1250,1020'],['lane','380,1350 540,1380'],['lane','390,1420 550,1330'],
['major','80,93 340,110 720,145 870,160 1040,205 1160,245 1300,300 1440,345 1568,425'],['road','230,0 330,45 340,200 350,300 370,340 520,580 620,740'],['road','0,695 200,520 300,520 520,578 620,610 1035,730 1330,820'],['major','1314,0 1300,200 1288,470 1270,510 1035,730 1020,790'],['road','1130,0 1210,20 1430,45'],['major','1025,940 1050,1050 1075,1280 1095,1470 1150,1575'],
['road','1575,880 1530,960 1480,1140 1430,1240 1350,1310 1250,1325 1050,1350 920,1390 780,1450'],['road','720,1568 800,1530 930,1470 1100,1430 1350,1385'],['road','1360,1390 1360,1568'],['road','1350,1440 1270,1568'],['lane','1230,1430 1130,1450'],['lane','1430,1440 1568,1400'],
['ring','732,-5 735,60 720,150 690,320 625,650 622,770 640,890 690,1130 720,1320 752,1500'],['main','-5,1000 60,1080 240,1340 400,1575'],['main','1425,-5 1428,330 1438,470 1400,640 1320,850 1262,1050 1275,1120 1330,1240 1355,1380 1410,1375 1440,1385 1575,1500'],['main','1410,1375 1500,1290 1575,1180'],['motor','1430,45 1480,38 1500,22 1575,15']
]};

// Fish ponds and field strips: [quadrant, region, count, kind]
const chips = [
['A','95,40 250,60 250,190 110,190',60,'water'],['A','250,40 350,50 350,140 280,130',18,'water'],['A','450,118 548,118 548,190 450,190',26,'water'],['A','500,690 600,660 760,780 700,800 530,780',34,'water'],['A','0,1200 250,1200 260,1300 0,1360',50,'water'],['A','200,1300 480,1320 540,1568 200,1568',150,'water'],['A','1220,1400 1360,1390 1330,1568 1210,1568',60,'water'],['A','880,1290 970,1300 940,1340 880,1330',14,'water'],['A','1180,480 1470,490 1470,555 1300,560',22,'mid'],['A','180,390 300,440 440,640 350,640 250,480',24,'mid'],['A','320,640 400,640 400,680 320,690',16,'water'],['A','930,1440 990,1440 980,1568 930,1568',12,'water'],['A','20,1440 180,1400 190,1568 60,1568',14,'mid'],['A','1060,1250 1110,1250 1110,1500 1080,1500',20,'water'],
['B','160,1020 330,1060 340,950 500,900 520,1060 380,1190 310,1190',50,'mid'],['B','360,1190 480,1200 480,1320 380,1300',16,'water'],['B','1090,1180 1160,1180 1160,1240 1090,1240',8,'water'],['B','680,460 750,460 700,490',5,'water'],
['C','230,30 390,30 390,200 230,200',60,'water'],['C','550,130 720,160 800,340 560,440',150,'water'],['C','830,30 980,30 950,300 840,240',34,'water'],['C','1100,50 1270,60 1200,250 1050,370 980,280',110,'water'],['C','570,450 850,360 850,560 720,700 600,620',110,'water'],['C','850,600 1100,380 1100,480 950,680',60,'mid'],['C','0,60 270,80 230,340 0,300',50,'mid'],['C','270,270 540,270 540,560 400,600 280,360',70,'mid'],['C','60,400 300,420 280,580 60,580',40,'mid'],['C','380,660 500,700 500,760 400,740',8,'mid'],['C','0,960 330,960 420,880 300,1180 0,1180',60,'mid'],['C','0,1140 230,1140 230,1360 60,1300',70,'mid'],['C','270,1180 500,1180 500,1568 200,1568',130,'mid'],['C','500,1200 770,1190 770,1560 530,1560',170,'mid'],['C','520,1200 760,1210 760,1560 560,1560',110,'water'],['C','1180,340 1320,360 1300,450 1200,400',30,'water'],['C','1500,1370 1568,1390 1568,1568 1510,1568',14,'mid'],['C','1500,500 1568,480 1568,680 1500,680',24,'mid'],['C','1040,1140 1100,1160 1060,1170',3,'mid'],['C','620,600 780,620 740,710 620,700',24,'water'],['C','80,700 340,700 300,800 120,780',14,'mid'],
['D','0,720 300,760 0,950',26,'mid'],['D','40,1060 330,1000 580,960 580,1100 250,1250 80,1180',90,'mid'],['D','0,1200 330,1240 180,1400 0,1568',70,'mid'],['D','260,800 360,820 340,890 260,860',12,'water'],['D','870,1030 1050,1040 1050,1160 900,1150',26,'mid'],['D','560,950 640,960 600,1040 560,1000',12,'water']
];

const NS = 'http://www.w3.org/2000/svg';
const toMap = (q, s) => s.split(' ').map(p => { const [x, y] = p.split(',').map(Number); return [origin[q][0] + x * SX, origin[q][1] + y * SY]; });
function add(parent, tag, attrs) {
  const el = document.createElementNS(NS, tag);
  for (const k in attrs) el.setAttribute(k, attrs[k]);
  document.getElementById(parent).appendChild(el);
}
function inside(x, y, poly) {
  let hit = false;
  for (let i = 0, j = poly.length - 1; i < poly.length; j = i++) {
    const [a, b] = poly[i], [c, d] = poly[j];
    if ((b > y) !== (d > y) && x < (c - a) * (y - b) / (d - b) + a) hit = !hit;
  }
  return hit;
}
let seed = 71;
const rnd = () => (seed = (seed * 16807) % 2147483647) / 2147483647;

for (const q in areas) for (const [kind, pts] of areas[q]) add('areas', 'polygon', { points: toMap(q, pts).join(' '), fill: fill[kind] });

for (const [q, region, count, kind] of chips) {
  const poly = toMap(q, region);
  const xs = poly.map(p => p[0]), ys = poly.map(p => p[1]);
  const x0 = Math.min(...xs), x1 = Math.max(...xs), y0 = Math.min(...ys), y1 = Math.max(...ys);
  let d = '';
  for (let i = 0, tries = 0; i < count && tries < 4000; tries++) {
    const x = Math.round(x0 + rnd() * (x1 - x0)), y = Math.round(y0 + rnd() * (y1 - y0));
    if (!inside(x, y, poly)) continue;
    i++;
    const thin = rnd() < (kind === 'mid' ? .8 : .35), flip = rnd() < .35;
    let w = Math.round(5 + rnd() * (thin ? 17 : 8)), h = thin ? 2 : Math.round(3 + rnd() * 6);
    if (flip) [w, h] = [h, w];
    d += `M${x} ${y}h${w}v${h}h${-w}z`;
    if (rnd() < .5) d += `M${x + w - 2} ${y + h - 2}h${3 + Math.round(rnd() * 3)}v${3 + Math.round(rnd() * 7)}h-3z`;
  }
  add('chips', 'path', { d, fill: fill[kind] });
}

function curve(p) {
  let d = `M${p[0]}`;
  for (let i = 0; i < p.length - 1; i++) {
    const a = p[i - 1] || p[i], b = p[i], c = p[i + 1], e = p[i + 2] || c, k = 0.1;
    d += `C${b[0] + (c[0] - a[0]) * k} ${b[1] + (c[1] - a[1]) * k} ${c[0] - (e[0] - b[0]) * k} ${c[1] - (e[1] - b[1]) * k} ${c[0]} ${c[1]}`;
  }
  return d;
}
for (const level of ['bank', 'river', 'canal', 'creek', 'lane', 'road', 'major', 'ring', 'main', 'motor'])
  for (const [color, width] of stroke[level])
    for (const q in roads) for (const [kind, pts] of roads[q])
      if (kind === level) add('roads', 'path', { d: curve(toMap(q, pts)), fill: 'none', stroke: color, 'stroke-width': width, 'stroke-linejoin': 'round' });
```
